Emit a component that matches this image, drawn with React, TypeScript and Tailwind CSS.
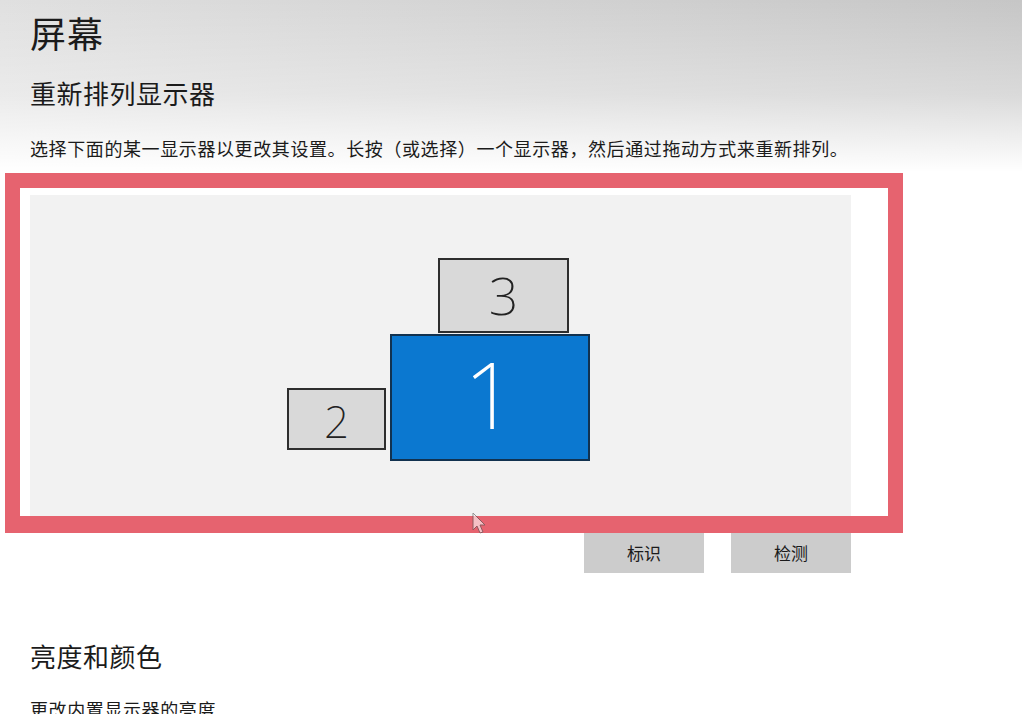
const cjk = { fontFamily: '"Noto Sans CJK SC", "Noto Sans", sans-serif' };

function Monitor({
  n,
  className,
  numClass,
}: {
  n: string;
  className: string;
  numClass: string;
}) {
  return (
    <div className={`absolute flex items-center justify-center ${className}`}>
      <span
        className={`leading-none font-extralight ${numClass}`}
        style={{ fontFamily: '"Noto Sans", "Open Sans", sans-serif' }}
      >
        {n}
      </span>
    </div>
  );
}

function Cursor() {
  return (
    <svg
      className="absolute left-[472px] top-[512px] opacity-60"
      width="16"
      height="24"
      viewBox="0 0 16 24"
    >
      <path
        d="M1 1 L1 18 L5 14 L8 21 L11 20 L8 13 L13 13 Z"
        fill="#ffffff"
        stroke="#555555"
        strokeWidth="1"
      />
    </svg>
  );
}

export default function App() {
  return (
    <div className="relative w-[1022px] h-[714px] overflow-hidden bg-white text-[#1b1b1b]" style={cjk}>
      <div className="h-[172px] px-[30px] pt-[8px] bg-[linear-gradient(to_bottom,rgba(255,255,255,0)_0%,rgba(255,255,255,0.35)_55%,#ffffff_100%),linear-gradient(to_right,#e0e0e0,#c6c6c6)]">
        <h1 className="text-[36px] leading-[48px] tracking-[1px]">屏幕</h1>
        <h2 className="mt-[19px] text-[26px] leading-[35px] tracking-[0.5px]">重新排列显示器</h2>
        <p className="mt-[25px] text-[18px] leading-[26px] tracking-[0.6px]">
          选择下面的某一显示器以更改其设置。长按（或选择）一个显示器，然后通过拖动方式来重新排列。
        </p>
      </div>

      <div className="ml-[5px] mt-[1px] w-[898px] border-[15px] border-b-[17px] border-[#e6636f] bg-white pl-[10px] pt-[7px] pr-[37px]">
        <div className="relative h-[321px] bg-[#f2f2f2]">
          <Monitor
            n="3"
            className="left-[408px] top-[63px] w-[131px] h-[75px] bg-[#d9d9d9] border-2 border-[#2e2e2e]"
            numClass="text-[52px] text-[#222] pb-[2px]"
          />
          <Monitor
            n="1"
            className="left-[360px] top-[139px] w-[200px] h-[127px] bg-[#0b78d0] border-2 border-[#12324f]"
            numClass="text-[92px] text-white pb-[8px]"
          />
          <Monitor
            n="2"
            className="left-[257px] top-[193px] w-[99px] h-[62px] bg-[#d9d9d9] border-2 border-[#2e2e2e]"
            numClass="text-[44px] text-[#222] pt-[4px]"
          />
        </div>
      </div>

      <div className="flex justify-end gap-[27px] w-[851px]">
        <button className="w-[120px] h-[40px] bg-[#cccccc] text-[17px] text-[#1b1b1b]">标识</button>
        <button className="w-[120px] h-[40px] bg-[#cccccc] text-[17px] text-[#1b1b1b]">检测</button>
      </div>

      <div className="px-[30px]">
        <h2 className="mt-[65px] text-[26px] leading-[35px] tracking-[0.5px]">亮度和颜色</h2>
        <p className="mt-[23px] text-[18px] leading-[26px] tracking-[0.6px]">更改内置显示器的亮度</p>
      </div>

      <Cursor />
    </div>
  );
}
